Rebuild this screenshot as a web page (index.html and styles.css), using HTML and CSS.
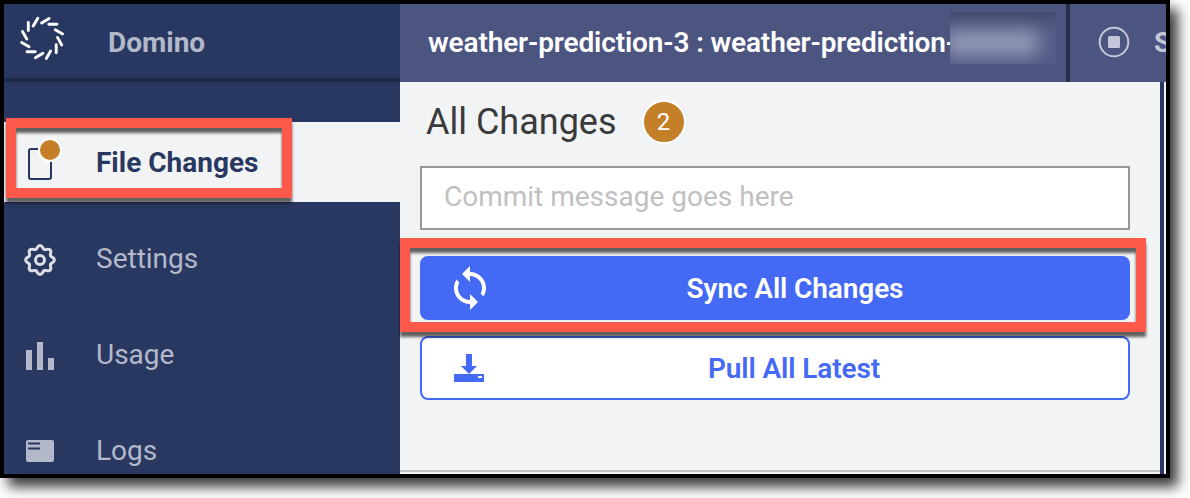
FILE: index.html
```html
<!DOCTYPE html>
<html lang="en">
<head>
  <meta charset="UTF-8">
  <meta name="viewport" content="width=device-width, initial-scale=1">
  <title>Domino</title>
  <link rel="stylesheet" href="styles.css">
</head>
<body>
  <div class="window">
    <nav class="sidebar">
      <div class="brand">
        <svg class="logo" width="46" height="46" viewBox="0 0 46 46">
          <path d="M9.300 7.500v8M18.800 3.200l-4.600 7.900M22.600 8l7.500-4.400M29.800 9.300h8.200M36.200 14.700l7.400 4.200M38.500 22.400l4.200 7.600M37.200 29.800v8M31.600 36l-4.300 7.500M23.900 38.200l-7.500 4.500M16.300 36.800H8M10.100 31.800L2.700 27.500M7.800 24.100l-4.300-7.600"/>
        </svg>
        <span>Domino</span>
      </div>
      <ul class="menu">
        <li class="active">
          <svg width="36" height="44" viewBox="0 0 36 44">
            <rect class="page" x="7" y="9" width="22" height="30" rx="2"/>
            <circle class="dot" cx="28" cy="10" r="11"/>
          </svg>
          <span>File Changes</span>
        </li>
        <li>
          <svg width="36" height="40" viewBox="0 -4 36 40">
            <path class="gear" d="M13.700 7.500C15.400 6.800 15.200 3.600 18 3.600S20.600 6.800 22.300 7.500C24 8.200 26.200 6 28.100 7.900S27.800 12 28.500 13.700C29.200 15.400 32.400 15.200 32.400 18S29.200 20.600 28.500 22.300C27.800 24 30 26.200 28.100 28.100S24 27.800 22.300 28.500C20.600 29.200 20.800 32.400 18 32.400S15.400 29.200 13.700 28.500C12 27.800 9.800 30 7.900 28.100S8.200 24 7.500 22.300C6.800 20.600 3.600 20.800 3.600 18S6.800 15.400 7.500 13.700C8.200 12 6 9.800 7.900 7.900S12 8.200 13.700 7.500z"/>
            <circle class="gear" cx="18" cy="18" r="4.500"/>
          </svg>
          <span>Settings</span>
        </li>
        <li>
          <svg width="36" height="40" viewBox="0 -4 36 40">
            <path class="solid" d="M4 12h6v20H4zM15 4h6v28h-6zM26 20h6v12h-6z"/>
          </svg>
          <span>Usage</span>
        </li>
        <li>
          <svg width="36" height="36" viewBox="0 0 36 36">
            <rect class="solid" x="4" y="8" width="28" height="22" rx="2"/>
            <path class="lines" d="M6 11.500h12M6 16.500h12"/>
          </svg>
          <span>Logs</span>
        </li>
      </ul>
    </nav>

    <div class="main">
      <header class="topbar">
        <div class="project">
          <span>weather-prediction-3 : weather-prediction-</span>
          <div class="redacted"></div>
        </div>
        <div class="stop">
          <svg width="32" height="32" viewBox="0 0 32 32">
            <circle cx="16" cy="16" r="14.300"/>
            <rect x="10" y="10" width="12" height="12" rx="1.500"/>
          </svg>
          <span>S</span>
        </div>
      </header>

      <div class="content">
        <section class="panel">
          <h1>All Changes <span class="count">2</span></h1>
          <input class="commit" type="text" placeholder="Commit message goes here">
          <button class="btn btn-primary">
            <svg width="48" height="48" viewBox="0 0 24 24">
              <path d="M12 4V1L8 5l4 4V6c3.310 0 6 2.690 6 6 0 1.010-.25 1.970-.7 2.800l1.460 1.460C19.540 15.030 20 13.570 20 12c0-4.420-3.580-8-8-8zm0 14c-3.310 0-6-2.690-6-6 0-1.010.25-1.970.7-2.800L5.240 7.740C4.460 8.970 4 10.430 4 12c0 4.420 3.580 8 8 8v3l4-4-4-4v3z"/>
            </svg>
            <span>Sync All Changes</span>
          </button>
          <button class="btn btn-outline">
            <svg width="32" height="32" viewBox="0 0 32 32">
              <path d="M13 2h6v12h5l-8 8-8-8h5z"/>
              <path fill-rule="evenodd" d="M1 22h30v8H1zM25 24v2h4v-2z"/>
            </svg>
            <span>Pull All Latest</span>
          </button>
        </section>
      </div>
    </div>
  </div>

  <!-- highlight boxes -->
  <div class="highlight highlight-files"></div>
  <div class="highlight highlight-sync"></div>
</body>
</html>
```

FILE: styles.css
```css
* {
  box-sizing: border-box;
}
body {
  margin: 0;
  height: 498px;
  background: #fff;
  font-family: Roboto, sans-serif;
  font-size: 28px;
  overflow: hidden;
}
.window {
  display: flex;
  width: 1170px;
  height: 478px;
  border: 4px solid #000;
  overflow: hidden;
  box-shadow: 8px 9px 12px rgba(0,0,0,0.77);
}

/* sidebar */
.sidebar {
  flex: 0 0 396px;
  background: #293861;
  color: #b3b8ca;
}
.brand {
  display: flex;
  align-items: center;
  height: 78px;
  padding-left: 15px;
  border-bottom: 4px solid #1f2b48;
  font-weight: 700;
}
.brand span {
  margin: 3px 0 0 43px;
}
.logo {
  margin-top: -6px;
  fill: none;
  stroke: #fff;
  stroke-width: 2.9;
  stroke-linecap: round;
}
.menu {
  display: flex;
  flex-direction: column;
  gap: 16px;
  margin: 40px 0 0;
  padding: 0;
  list-style: none;
}
.menu li {
  display: flex;
  align-items: center;
  height: 80px;
  padding-left: 18px;
}
.menu svg {
  flex: none;
  margin-right: 38px;
  overflow: visible;
}
.menu .active {
  background: #f2f3f5;
  color: #293861;
  font-weight: 700;
}
.page {
  fill: none;
  stroke: #293861;
  stroke-width: 2;
}
.dot {
  fill: #c48029;
  stroke: #fff;
  stroke-width: 2;
}
.gear {
  fill: none;
  stroke: #dcdfe5;
  stroke-width: 3;
}
.solid {
  fill: #b3b8ca;
}
.lines {
  stroke: #293861;
  stroke-width: 2;
}

/* top bar */
.main {
  flex: 1;
  min-width: 0;
  display: flex;
  flex-direction: column;
}
.topbar {
  display: flex;
  flex: 0 0 78px;
  background: #4c557f;
  font-weight: 700;
  white-space: nowrap;
  overflow: hidden;
}
.project {
  display: flex;
  align-items: center;
  flex: 0 0 670px;
  padding-left: 28px;
  border-right: 4px solid #292f49;
  color: #fff;
  font-weight: 600;
}
.project span {
  width: 522px;
  margin-top: -2px;
  letter-spacing: -0.13px;
}
.redacted {
  width: 106px;
  height: 52px;
  margin-top: -10px;
  background: linear-gradient(#424a6e, #535c86 35%, #525b86);
  overflow: hidden;
  z-index: 1;
}
.redacted::before {
  content: "";
  display: block;
  width: 92px;
  height: 24px;
  margin: 19px 0 0 -4px;
  background: #979db8;
  filter: blur(9px);
}
.stop {
  display: flex;
  align-items: center;
  gap: 24px;
  padding: 0 0 2px 28px;
  color: #c4c7d8;
}
.stop svg {
  flex: none;
}
.stop circle {
  fill: none;
  stroke: #c4c7d8;
  stroke-width: 2;
}
.stop rect {
  fill: #c4c7d8;
}

/* changes panel */
.content {
  flex: 1;
  margin-right: 2px;
  background: #f2f3f5;
  border-right: 4px solid #293861;
  box-shadow: 2px 0 #f2f3f5;
}
.panel {
  height: 390px;
  padding: 0 30px 0 20px;
  border-bottom: 2px solid #bfbfbf;
}
h1 {
  display: flex;
  align-items: center;
  height: 84px;
  margin: 0;
  padding: 0 0 4px 6px;
  color: #3a3a3a;
  font-size: 36px;
  font-weight: 400;
}
.count {
  width: 44px;
  height: 44px;
  margin-left: 25px;
  border: 2px solid #fff;
  border-radius: 50%;
  background: #c48029;
  color: #fff;
  font-size: 24px;
  line-height: 40px;
  text-align: center;
}
.commit {
  display: block;
  width: 710px;
  height: 64px;
  padding: 0 22px 4px;
  border: 2px solid #979797;
  border-radius: 0;
  background: #fff;
  font: 28px Roboto, sans-serif;
}
.commit::placeholder {
  color: #bfc0c2;
}
.btn {
  display: flex;
  align-items: center;
  width: 710px;
  height: 64px;
  border-radius: 8px;
  font: 600 28px Roboto, sans-serif;
  letter-spacing: -0.1px;
}
.btn svg {
  flex: none;
  fill: currentColor;
}
.btn span {
  flex: 1;
  text-align: center;
}
.btn-primary {
  margin-top: 26px;
  padding: 0 34px 0 26px;
  border: none;
  background: #4469f5;
  color: #fff;
}
.btn-outline {
  margin-top: 16px;
  padding: 0 25px 0 31px;
  border: 2px solid #4469f5;
  background: #fff;
  color: #4469f5;
}

.highlight {
  position: absolute;
  border: 10px solid #ff594c;
  filter: drop-shadow(0 5px 1.5px rgba(0,0,0,0.6));
}
.highlight-files {
  left: 6px;
  top: 118px;
  width: 286px;
  height: 80px;
}
.highlight-sync {
  left: 400px;
  top: 238px;
  width: 746px;
  height: 94px;
}
```
